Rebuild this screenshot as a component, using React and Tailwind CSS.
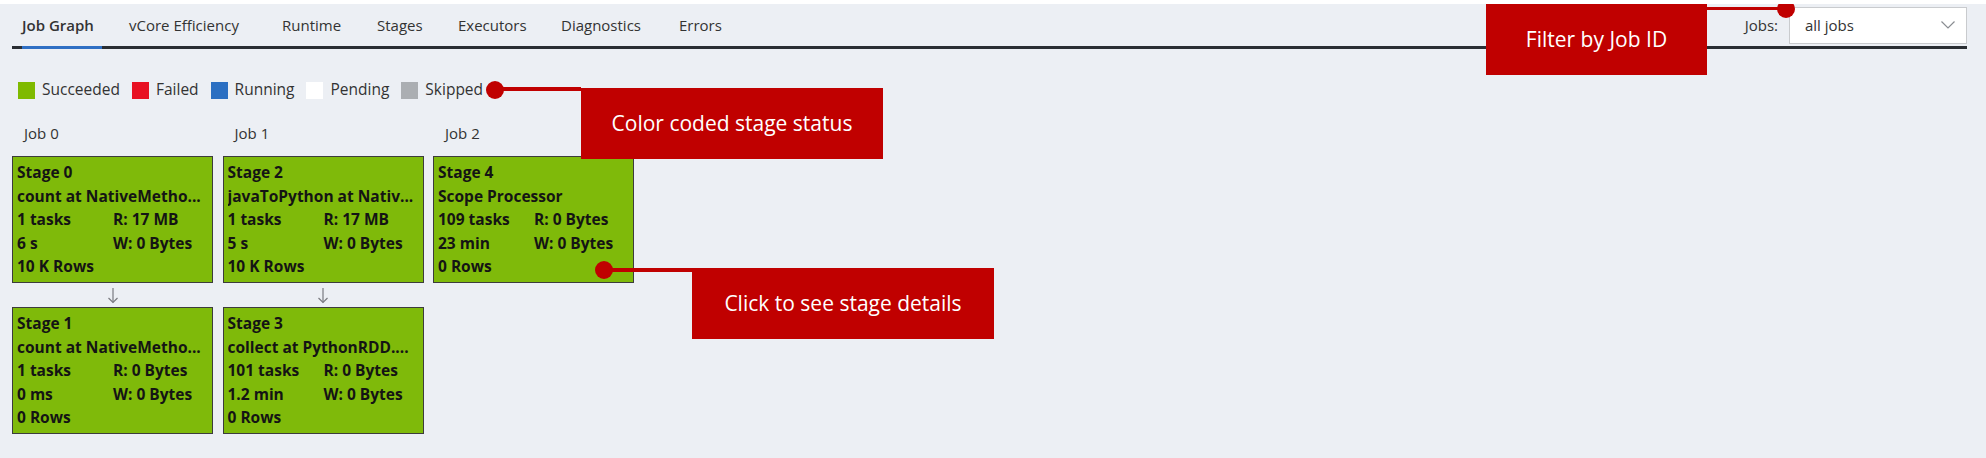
import React from "react";

const tabs = [
  { label: "Job Graph", w: "w-[107px]", active: true },
  { label: "vCore Efficiency", w: "w-[153px]" },
  { label: "Runtime", w: "w-[95px]" },
  { label: "Stages", w: "w-[81px]" },
  { label: "Executors", w: "w-[103px]" },
  { label: "Diagnostics", w: "w-[118px]" },
  { label: "Errors", w: "w-[60px]" },
];

const legend = [
  { label: "Succeeded", color: "bg-[#7fba00]" },
  { label: "Failed", color: "bg-[#e81123]" },
  { label: "Running", color: "bg-[#2b6fc2]" },
  { label: "Pending", color: "bg-white" },
  { label: "Skipped", color: "bg-[#abaeb2]" },
];

const jobs = [
  {
    name: "Job 0",
    stages: [
      { id: 0, desc: "count at NativeMetho...", tasks: "1 tasks", r: "R: 17 MB", time: "6 s", w: "W: 0 Bytes", rows: "10 K Rows" },
      { id: 1, desc: "count at NativeMetho...", tasks: "1 tasks", r: "R: 0 Bytes", time: "0 ms", w: "W: 0 Bytes", rows: "0 Rows" },
    ],
  },
  {
    name: "Job 1",
    stages: [
      { id: 2, desc: "javaToPython at Nativ...", tasks: "1 tasks", r: "R: 17 MB", time: "5 s", w: "W: 0 Bytes", rows: "10 K Rows" },
      { id: 3, desc: "collect at PythonRDD....", tasks: "101 tasks", r: "R: 0 Bytes", time: "1.2 min", w: "W: 0 Bytes", rows: "0 Rows" },
    ],
  },
  {
    name: "Job 2",
    stages: [
      { id: 4, desc: "Scope Processor", tasks: "109 tasks", r: "R: 0 Bytes", time: "23 min", w: "W: 0 Bytes", rows: "0 Rows" },
    ],
  },
];

function StageCard({ s }) {
  return (
    <div className="h-[127px] w-[201px] border-[1.5px] border-[#3c3c3c] bg-[#7fba0a] px-[4px] pt-[4px] text-[15.5px] font-bold leading-[23.5px] text-[#141414]">
      <div>Stage {s.id}</div>
      <div className="overflow-hidden whitespace-nowrap">{s.desc}</div>
      <div className="flex">
        <span className="w-[96px]">{s.tasks}</span>
        <span>{s.r}</span>
      </div>
      <div className="flex">
        <span className="w-[96px]">{s.time}</span>
        <span>{s.w}</span>
      </div>
      <div>{s.rows}</div>
    </div>
  );
}

function DownArrow() {
  return (
    <div className="flex h-[24px] w-[201px] items-center justify-center">
      <svg width="12" height="17" viewBox="0 0 12 17" fill="none" stroke="#7a7a80" strokeWidth="1.2">
        <path d="M6 1 V15.5" />
        <path d="M1.5 11 L6 15.5 L10.5 11" />
      </svg>
    </div>
  );
}

function Callout({ className, children }) {
  return (
    <div
      className={`absolute flex items-center justify-center bg-[#c00000] text-[21px] text-white ${className}`}
    >
      {children}
    </div>
  );
}

export default function App() {
  return (
    <div
      className="relative h-[458px] w-[1986px] overflow-hidden border-t-4 border-white bg-[#eceff4] text-[#333]"
      style={{ fontFamily: '"Open Sans", "Noto Sans", sans-serif' }}
    >
      {/* tab bar */}
      <div className="ml-[12px] flex h-[45px] w-[1955px] items-center justify-between border-b-[3px] border-[#2a2e33] pl-[10px]">
        <div className="flex text-[15px] leading-[22px]">
          {tabs.map((t) => (
            <div key={t.label} className={`relative ${t.w} ${t.active ? "font-semibold" : ""}`}>
              {t.label}
              {t.active && <div className="absolute left-0 top-[32px] h-[3px] w-[80px] bg-[#2f6fc4]" />}
            </div>
          ))}
        </div>
        <div className="flex items-center gap-[11px] text-[15px]">
          <span>Jobs:</span>
          <div className="flex h-[37px] w-[178px] items-center justify-between border border-[#c9cbce] bg-white pl-[15px] pr-[11px]">
            <span>all jobs</span>
            <svg width="14" height="8" viewBox="0 0 14 8" fill="none" stroke="#8a8d92" strokeWidth="1.2">
              <path d="M0.5 0.5 L7 7 L13.5 0.5" />
            </svg>
          </div>
        </div>
      </div>

      {/* legend */}
      <div className="ml-[18px] mt-[31px] flex h-[20px] items-center gap-[12px] text-[15.5px]">
        {legend.map((l) => (
          <div key={l.label} className="flex items-center gap-[7px]">
            <span className={`h-[17px] w-[17px] ${l.color}`} />
            <span>{l.label}</span>
          </div>
        ))}
      </div>

      {/* job graph */}
      <div className="ml-[12px] mt-[23px] flex gap-[9.5px]">
        {jobs.map((job) => (
          <div key={job.name} className="flex flex-col">
            <div className="h-[20px] pl-[12px] text-[15px] leading-[20px]">{job.name}</div>
            <div className="mt-[13px]">
              {job.stages.map((s, i) => (
                <div key={s.id}>
                  {i > 0 && <DownArrow />}
                  <StageCard s={s} />
                </div>
              ))}
            </div>
          </div>
        ))}
      </div>

      {/* annotations */}
      <div className="absolute left-[1707px] top-[3px] h-[3px] w-[80px] bg-[#c00000]" />
      <div className="absolute left-[1777px] top-[-4px] h-[18px] w-[18px] rounded-full bg-[#c00000]" />
      <Callout className="left-[1486px] top-0 h-[71px] w-[221px]">Filter by Job ID</Callout>

      <div className="absolute left-[495px] top-[83px] h-[4px] w-[86px] bg-[#c00000]" />
      <div className="absolute left-[486px] top-[77px] h-[18px] w-[18px] rounded-full bg-[#c00000]" />
      <Callout className="left-[581px] top-[84px] h-[71px] w-[302px]">Color coded stage status</Callout>

      <div className="absolute left-[604px] top-[264px] h-[4px] w-[88px] bg-[#c00000]" />
      <div className="absolute left-[595px] top-[257px] h-[18px] w-[18px] rounded-full bg-[#c00000]" />
      <Callout className="left-[692px] top-[264px] h-[71px] w-[302px]">Click to see stage details</Callout>
    </div>
  );
}
